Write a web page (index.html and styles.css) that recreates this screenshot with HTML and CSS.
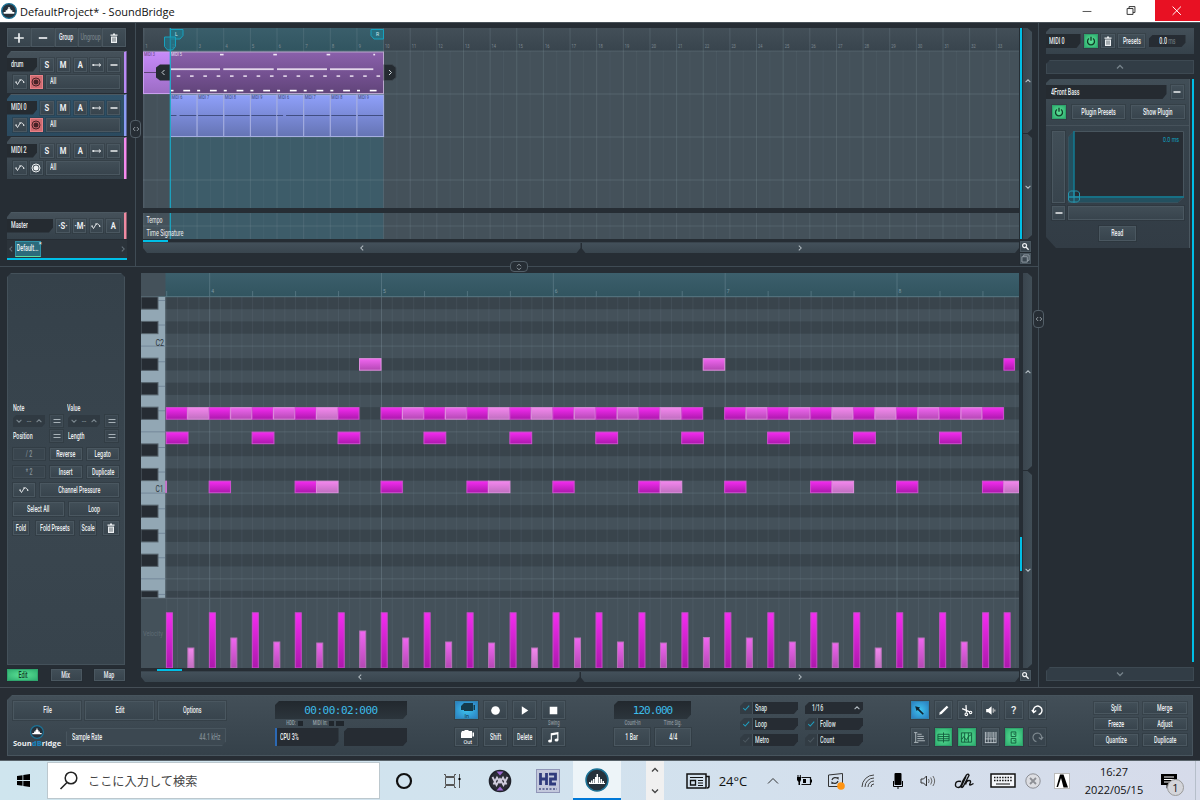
FILE: index.html
```
<!DOCTYPE html>
<html lang="ja">
<head>
    <meta charset="UTF-8">
    <meta name="viewport" content="width=device-width, initial-scale=1.0">
    <title>DefaultProject* - SoundBridge</title>
    <link rel="stylesheet" href="styles.css">
</head>
<body>

    <!-- Shared icons -->
    <svg class="defs" width="0" height="0">
        <symbol id="i-curve" viewBox="0 0 12 10"><path d="M1 5l2 3 3-5q1.500-1.500 3 0l1.500 2" fill="none" stroke="currentColor" stroke-width="1.100"/><circle cx="1.300" cy="5" r=".9" fill="currentColor"/><circle cx="6" cy="2.700" r=".9" fill="currentColor"/><circle cx="10.500" cy="5.300" r=".9" fill="currentColor"/></symbol>
        <symbol id="i-trash" viewBox="0 0 10 10"><path d="M1.500 1.500h7v1.300h-7zM4 .5h2v1H4zM2 3.400h6V10H2z" fill="currentColor"/><path d="M4 4.500v4.300M6 4.500v4.300" stroke="#3a464f" stroke-width=".8"/></symbol>
        <symbol id="i-arrow" viewBox="0 0 12 10"><path d="M2 5h8M8.300 3.200L10.500 5 8.300 6.800" fill="none" stroke="currentColor" stroke-width="1.200"/><circle cx="1.500" cy="5" r="1.300" fill="currentColor"/></symbol>
        <symbol id="i-minus" viewBox="0 0 10 10"><path d="M1.500 5h7" stroke="currentColor" stroke-width="1.400"/></symbol>
        <symbol id="i-plus" viewBox="0 0 10 10"><path d="M1 5h8M5 1v8" stroke="currentColor" stroke-width="1.400"/></symbol>
        <symbol id="i-rec" viewBox="0 0 10 10"><circle cx="5" cy="5" r="4" fill="none" stroke="currentColor" stroke-width="1"/><circle cx="5" cy="5" r="2.500" fill="currentColor"/></symbol>
        <symbol id="i-power" viewBox="0 0 10 10"><path d="M3 2.500a3.500 3.500 0 1 0 4 0M5 .8v4" fill="none" stroke="currentColor" stroke-width="1.300"/></symbol>
        <symbol id="i-up" viewBox="0 0 10 10"><path d="M2 6.500l3-3 3 3" fill="none" stroke="currentColor" stroke-width="1.300"/></symbol>
        <symbol id="i-down" viewBox="0 0 10 10"><path d="M2 3.500l3 3 3-3" fill="none" stroke="currentColor" stroke-width="1.300"/></symbol>
        <symbol id="i-left" viewBox="0 0 10 10"><path d="M6.500 2l-3 3 3 3" fill="none" stroke="currentColor" stroke-width="1.300"/></symbol>
        <symbol id="i-right" viewBox="0 0 10 10"><path d="M3.500 2l3 3-3 3" fill="none" stroke="currentColor" stroke-width="1.300"/></symbol>
        <symbol id="i-eq" viewBox="0 0 10 10"><path d="M1.500 3.500h7M1.500 6.500h7" stroke="currentColor" stroke-width="1"/></symbol>
        <symbol id="i-zoom" viewBox="0 0 10 10"><circle cx="4" cy="4" r="2.200" fill="none" stroke="currentColor" stroke-width="1.300"/><path d="M5.500 5.500L8.500 8.500" stroke="currentColor" stroke-width="1.600"/></symbol>
        <symbol id="i-copy" viewBox="0 0 10 10"><path d="M1 3h6v6H1zM3 3V1h6v6H7" fill="none" stroke="currentColor" stroke-width="1"/></symbol>
        <symbol id="i-check" viewBox="0 0 10 10"><path d="M1.500 5l2.500 2.500L9 2" fill="none" stroke="currentColor" stroke-width="1.300"/></symbol>
        <symbol id="i-logo" viewBox="0 0 24 24"><circle cx="12" cy="12" r="11" fill="#26313b" stroke="#1c7296" stroke-width="1.500"/><path d="M4 16v-2h1.500v2zM6 16v-3.500h1.500V16zM8 16v-5h1.500v5zM10 16V9h1.500v7zM11.500 16V6H13v10zM13.500 16V9H15v7zM15.500 16v-5H17v5zM17.500 16v-3h1.500v3zM4 15h16v1H4z" fill="#fff"/></symbol>
        <symbol id="i-logo-small" viewBox="0 0 24 24"><circle cx="12" cy="12" r="11" fill="#26313b" stroke="#1c7296" stroke-width="2"/><path d="M4 16v-2.500h3V11h2.500V8.500H11V6h2v2.500h1.500V11H17v2.500h3V16z" fill="#fff"/></symbol>
    </svg>

    <header class="titlebar">
        <svg class="title-logo"><use href="#i-logo-small"/></svg>
        <span class="title">DefaultProject* - SoundBridge</span>
        <svg class="win" viewBox="0 0 46 21"><path d="M18 11.500h9" stroke="#555" stroke-width="1"/></svg>
        <svg class="win" viewBox="0 0 46 21"><path d="M17.500 8.500h6v6h-6zM19.500 8.500v-2h6v6h-2" fill="none" stroke="#333"/></svg>
        <svg class="win close" viewBox="0 0 46 21"><path d="M18 6.500l8.500 8.500M26.500 6.500L18 15" stroke="#fff" stroke-width="1"/></svg>
    </header>

    <main class="workspace">
        <div class="left">
            <section class="upper">
                <aside class="tracks">
                    <div class="track-tools">
                        <div class="btn"><svg class="ic big"><use href="#i-plus"/></svg></div>
                        <div class="btn"><svg class="ic big"><use href="#i-minus"/></svg></div>
                        <div class="btn"><span class="t">Group</span></div>
                        <div class="btn dim"><span class="t">Ungroup</span></div>
                        <div class="btn"><svg class="ic"><use href="#i-trash"/></svg></div>
                    </div>
                    <div class="track violet">
                        <div class="trow">
                            <div class="name"><span class="t l">drum</span></div>
                            <div class="btn sq b"><span class="t">S</span></div><div class="btn sq b"><span class="t">M</span></div><div class="btn sq b"><span class="t">A</span></div>
                            <div class="btn sq"><svg class="ic"><use href="#i-arrow"/></svg></div>
                            <div class="btn sq"><svg class="ic"><use href="#i-minus"/></svg></div>
                        </div>
                        <div class="trow second">
                            <div class="btn sq"><svg class="ic"><use href="#i-curve"/></svg></div>
                            <div class="btn sq armed"><svg class="ic"><use href="#i-rec"/></svg></div>
                            <div class="btn input"><span class="t l">All</span></div>
                        </div>
                    </div>
                    <div class="track selected">
                        <div class="trow">
                            <div class="name"><span class="t l">MIDI 0</span></div>
                            <div class="btn sq b"><span class="t">S</span></div><div class="btn sq b"><span class="t">M</span></div><div class="btn sq b"><span class="t">A</span></div>
                            <div class="btn sq"><svg class="ic"><use href="#i-arrow"/></svg></div>
                            <div class="btn sq"><svg class="ic"><use href="#i-minus"/></svg></div>
                        </div>
                        <div class="trow second">
                            <div class="btn sq"><svg class="ic"><use href="#i-curve"/></svg></div>
                            <div class="btn sq armed"><svg class="ic"><use href="#i-rec"/></svg></div>
                            <div class="btn input"><span class="t l">All</span></div>
                        </div>
                    </div>
                    <div class="track pink">
                        <div class="trow">
                            <div class="name"><span class="t l">MIDI 2</span></div>
                            <div class="btn sq b"><span class="t">S</span></div><div class="btn sq b"><span class="t">M</span></div><div class="btn sq b"><span class="t">A</span></div>
                            <div class="btn sq"><svg class="ic"><use href="#i-arrow"/></svg></div>
                            <div class="btn sq"><svg class="ic"><use href="#i-minus"/></svg></div>
                        </div>
                        <div class="trow second">
                            <div class="btn sq"><svg class="ic"><use href="#i-curve"/></svg></div>
                            <div class="btn sq"><svg class="ic"><use href="#i-rec"/></svg></div>
                            <div class="btn input"><span class="t l">All</span></div>
                        </div>
                    </div>
                    <div class="track master">
                        <div class="trow">
                            <div class="name"><span class="t l">Master</span></div>
                            <div class="btn sq b"><span class="t">·S·</span></div><div class="btn sq b"><span class="t">·M·</span></div>
                            <div class="btn sq"><svg class="ic"><use href="#i-curve"/></svg></div>
                            <div class="btn sq b"><span class="t">A</span></div>
                        </div>
                    </div>
                    <div class="tabs">
                        <svg class="ic dimic"><use href="#i-left"/></svg>
                        <div class="tab"><span class="t">Default...</span><i>×</i></div>
                        <svg class="ic dimic end"><use href="#i-right"/></svg>
                    </div>
                    <div class="grip v tracks-grip"><svg viewBox="0 0 10 10"><path d="M4 2.500L1.500 5 4 7.500M6 2.500L8.500 5 6 7.500" fill="none" stroke="#aab3b9"/></svg></div>
                </aside>
                <div class="arrange">
                    <svg id="arrange" width="876" height="180"></svg>
                    <svg id="tempo" width="876" height="26"></svg>
                    <div class="line"><i></i></div>
                    <div class="hscroll">
                        <div class="thumb a"><svg class="ic"><use href="#i-left"/></svg></div>
                        <div class="thumb z"><svg class="ic"><use href="#i-right"/></svg></div>
                    </div>
                </div>
                <div class="side">
                    <div class="side-main">
                        <div class="mark"></div>
                        <div class="vscroll">
                            <div class="thumb up"><svg class="ic"><use href="#i-up"/></svg></div>
                            <div class="thumb dn"><svg class="ic"><use href="#i-down"/></svg></div>
                        </div>
                    </div>
                    <div class="btn mini"><svg class="ic"><use href="#i-zoom"/></svg></div>
                    <div class="btn mini grey"><svg class="ic"><use href="#i-copy"/></svg></div>
                </div>
                <div class="grip h"><svg viewBox="0 0 10 10"><path d="M2.500 4L5 1.500 7.500 4M2.500 6L5 8.500 7.500 6" fill="none" stroke="#aab3b9"/></svg></div>
            </section>

            <section class="lower">
                <aside class="editor">
                    <div class="edit-panel">
                        <div class="erow labels"><span class="t l">Note</span><span class="t l">Value</span></div>
                        <div class="erow steps">
                            <div class="stepper"><svg class="ic"><use href="#i-down"/></svg>--<svg class="ic"><use href="#i-up"/></svg></div>
                            <div class="btn eq"><svg class="ic"><use href="#i-eq"/></svg></div>
                            <div class="stepper"><svg class="ic"><use href="#i-down"/></svg>--<svg class="ic"><use href="#i-up"/></svg></div>
                            <div class="btn eq"><svg class="ic"><use href="#i-eq"/></svg></div>
                        </div>
                        <div class="erow steps second">
                            <div class="cap"><span class="t l">Position</span></div>
                            <div class="btn eq"><svg class="ic"><use href="#i-eq"/></svg></div>
                            <div class="cap"><span class="t l">Length</span></div>
                            <div class="btn eq"><svg class="ic"><use href="#i-eq"/></svg></div>
                        </div>
                        <div class="erow c3"><div class="btn dim2"><span class="t">/ 2</span></div><div class="btn"><span class="t">Reverse</span></div><div class="btn"><span class="t">Legato</span></div></div>
                        <div class="erow c3"><div class="btn dim2"><span class="t">* 2</span></div><div class="btn"><span class="t">Insert</span></div><div class="btn"><span class="t">Duplicate</span></div></div>
                        <div class="erow c2a"><div class="btn"><svg class="ic"><use href="#i-curve"/></svg></div><div class="btn"><span class="t">Channel Pressure</span></div></div>
                        <div class="erow c2"><div class="btn"><span class="t">Select All</span></div><div class="btn"><span class="t">Loop</span></div></div>
                        <div class="erow c4"><div class="btn"><span class="t">Fold</span></div><div class="btn"><span class="t">Fold Presets</span></div><div class="btn"><span class="t">Scale</span></div><div class="btn"><svg class="ic"><use href="#i-trash"/></svg></div></div>
                    </div>
                    <div class="modes">
                        <div class="btn green"><span class="t">Edit</span></div>
                        <div class="btn"><span class="t">Mix</span></div>
                        <div class="btn"><span class="t">Map</span></div>
                    </div>
                </aside>
                <div class="piano">
                    <svg id="roll" width="878" height="395"></svg>
                    <div class="line"><i></i></div>
                    <div class="hscroll">
                        <div class="thumb a"><svg class="ic"><use href="#i-left"/></svg></div>
                        <div class="thumb z"><svg class="ic"><use href="#i-right"/></svg></div>
                    </div>
                </div>
                <div class="side">
                    <div class="side-main">
                        <div class="mark short"></div>
                        <div class="vscroll">
                            <div class="thumb up"><svg class="ic"><use href="#i-up"/></svg></div>
                            <div class="thumb dn"><svg class="ic"><use href="#i-down"/></svg></div>
                        </div>
                    </div>
                    <div class="btn mini"><svg class="ic"><use href="#i-zoom"/></svg></div>
                </div>
            </section>
        </div>

        <aside class="rack">
            <div class="grip v rack-grip"><svg viewBox="0 0 10 10"><path d="M4 2.500L1.500 5 4 7.500M6 2.500L8.500 5 6 7.500" fill="none" stroke="#aab3b9"/></svg></div>
            <div class="rack-head">
                <div class="name"><span class="t l">MIDI 0</span></div>
                <div class="btn sq green"><svg class="ic"><use href="#i-power"/></svg></div>
                <div class="btn sq"><svg class="ic"><use href="#i-trash"/></svg></div>
                <div class="btn presets"><span class="t">Presets</span></div>
                <div class="delay"><span class="t">0.0 <em>ms</em></span></div>
            </div>
            <div class="rack-nav"><svg class="ic"><use href="#i-up"/></svg></div>
            <div class="rack-body">
                <div class="plugin">
                    <div class="prow first"><div class="name"><span class="t l">4Front Bass</span></div><div class="btn sq"><svg class="ic"><use href="#i-minus"/></svg></div></div>
                    <div class="prow"><div class="btn sq green"><svg class="ic"><use href="#i-power"/></svg></div><div class="btn w"><span class="t">Plugin Presets</span></div><div class="btn w"><span class="t">Show Plugin</span></div></div>
                    <div class="pad">
                        <div class="btn"></div>
                        <svg width="116" height="72" viewBox="0 0 116 72">
                            <path d="M.5 6L6 .5h109.500V66L110 71.500H.5z" fill="#272d34" stroke="#48555e"/>
                            <path d="M.5 6L6 .5V65h109.500L110 71.500H.5z" fill="#24505f"/>
                            <path d="M6 0v66M0 66h116" stroke="#137b93" stroke-width="1.500"/>
                            <path d="M.5 64v-2l2-2h7l2 2v7l-2 2h-7l-2-2zM6 60v12M0 66h12" fill="none" stroke="#2794ac"/>
                            <text x="95" y="11" textLength="16" lengthAdjust="spacingAndGlyphs" class="cyan-text">0.0 ms</text>
                        </svg>
                        <div class="btn"><svg class="ic"><use href="#i-minus"/></svg></div>
                        <div class="btn"></div>
                    </div>
                    <div class="btn read"><span class="t">Read</span></div>
                </div>
                <div class="rack-line"></div>
            </div>
            <div class="rack-nav last"><svg class="ic"><use href="#i-down"/></svg></div>
        </aside>
    </main>

    <footer class="transport">
        <div class="deck">
            <div class="g-menu">
                <div class="menu"><div class="btn"><span class="t">File</span></div><div class="btn"><span class="t">Edit</span></div><div class="btn"><span class="t">Options</span></div></div>
                <div class="brand-row">
                    <div class="brand"><svg><use href="#i-logo-small"/></svg><span>Soun<b>dB</b>ridge</span></div>
                    <div class="rate"><span class="t l">Sample Rate</span><span class="t r">44.1 kHz</span></div>
                </div>
            </div>
            <div class="g-time">
                <div class="lcd">00:00:02:000</div>
                <div class="leds"><span class="t r">HDD:</span><i></i><span class="t r">MIDI In:</span><i></i><i class="wide"></i></div>
                <div class="meters"><div class="cpu"><span class="t l">CPU 3%</span></div><div></div></div>
            </div>
            <div class="g-play">
                <div class="btn blue"><svg viewBox="0 0 18 16" width="18" height="16"><path d="M3 4l3-3h9v8H6V8H3zM15.500 3h1.500v5h-1.500z" fill="#153a4a"/><text x="6.500" y="15.500" class="tiny dark">In</text></svg></div>
                <div class="btn"><svg viewBox="0 0 12 12" class="ic pl"><circle cx="6" cy="6" r="4" fill="#fff"/></svg></div>
                <div class="btn"><svg viewBox="0 0 12 12" class="ic pl"><path d="M3.500 2l6 4-6 4z" fill="#fff"/></svg></div>
                <div class="btn"><svg viewBox="0 0 12 12" class="ic pl"><path d="M2.500 2.500h7v7h-7z" fill="#fff"/></svg></div>
                <span></span><span></span><span></span><span class="cap"><span class="t">Swing</span></span>
                <div class="btn"><svg viewBox="0 0 18 16" width="18" height="16"><path d="M3 4l1-2h2l1-1h3l1 1h3v7H3zM14.500 3.500H16v4h-1.500z" fill="#fff"/><text x="5.500" y="15" class="tiny">Out</text></svg></div>
                <div class="btn"><span class="t">Shift</span></div>
                <div class="btn"><span class="t">Delete</span></div>
                <div class="btn"><svg viewBox="0 0 12 12" class="ic pl"><path d="M4 9V2.500l6-1V8M4 3.500l6-1" fill="none" stroke="#fff" stroke-width="1.100"/><ellipse cx="2.800" cy="9.300" rx="1.800" ry="1.400" fill="#fff"/><ellipse cx="8.800" cy="8.300" rx="1.800" ry="1.400" fill="#fff"/></svg></div>
            </div>
            <div class="g-tempo">
                <div class="lcd">120.000</div>
                <span class="cap"><span class="t">Count-In</span></span><span class="cap"><span class="t">Time Sig.</span></span>
                <div class="btn"><span class="t">1 Bar</span></div><div class="btn"><span class="t">4/4</span></div>
            </div>
            <div class="g-opts">
                <div class="opt on"><svg class="ic"><use href="#i-check"/></svg><span class="t l">Snap</span></div>
                <div class="opt sel"><span class="t l">1/16</span><svg class="ic"><use href="#i-up"/></svg></div>
                <div class="opt on"><svg class="ic"><use href="#i-check"/></svg><span class="t l">Loop</span></div>
                <div class="opt on"><svg class="ic"><use href="#i-check"/></svg><span class="t l">Follow</span></div>
                <div class="opt"><svg class="ic"><use href="#i-check"/></svg><span class="t l">Metro</span></div>
                <div class="opt"><svg class="ic"><use href="#i-check"/></svg><span class="t l">Count</span></div>
            </div>
            <div class="g-tools">
                <div class="btn blue"><svg viewBox="0 0 12 12" class="ic pl"><path d="M2 2l4.500 1.300-1 1L10 9l-1 1-4.700-4.500-1 1z" fill="#10242f"/></svg></div>
                <div class="btn"><svg viewBox="0 0 12 12" class="ic pl"><path d="M2 10l.7-2.300L9 1.500 10.500 3 4.300 9.300z" fill="#fff"/></svg></div>
                <div class="btn"><svg viewBox="0 0 12 12" class="ic pl"><path d="M5.500 1l.5 7M2 4.300l7.500 3.200" stroke="#fff" stroke-width="1.200"/><circle cx="5.800" cy="9.500" r="1.200" fill="none" stroke="#fff"/><circle cx="9.800" cy="7.800" r="1.100" fill="none" stroke="#fff"/></svg></div>
                <div class="btn"><svg viewBox="0 0 12 12" class="ic pl"><path d="M2 4.500h2L7 2v8L4 7.500H2z" fill="#fff"/><path d="M8.500 4v4M10 5v2" stroke="#ccc"/></svg></div>
                <div class="btn q">?</div>
                <div class="btn"><svg viewBox="0 0 12 12" class="ic pl"><path d="M2.500 7.500A4 4 0 1 1 7 9.800M.8 5.500l1.700 2.300L4.800 6" fill="none" stroke="#fff" stroke-width="1.300"/></svg></div>
                <div class="btn grey"><svg viewBox="0 0 12 12" class="ic pl"><path d="M1 1.500h3M1 10.500h4M2.500 1.500v9M4 3h4M4 5h6M4 7h6M4 9h7" fill="none" stroke="#bcc5ca" stroke-width=".8"/></svg></div>
                <div class="btn green"><svg viewBox="0 0 14 14" class="ic pl"><path d="M1 3.500h12v7H1zM1 6h12M1 8.300h12M7 1.500v11" fill="none" stroke="#125c3d"/></svg></div>
                <div class="btn green"><svg viewBox="0 0 14 14" class="ic pl"><path d="M1.500 2h11v10h-11zM5 2v10M9 2v10M2 9l2-3 3 4 2-4 3-2" fill="none" stroke="#125c3d"/></svg></div>
                <div class="btn"><svg viewBox="0 0 14 14" class="ic pl"><path d="M1.500 1v12M4.500 1v12M7.500 1v12M10.500 1v12M13 1v12" fill="none" stroke="#bcc5ca"/><path d="M3 1v6M6 1v6M9 1v6M12 1v6" stroke="#9aa5ab" stroke-width=".8"/><path d="M1 8.500h12M1 12.500h12" stroke="#bcc5ca"/></svg></div>
                <div class="btn green"><svg viewBox="0 0 14 14" class="ic pl"><path d="M4.500 1h5v5h-5zM4.500 8h5v5h-5zM7 3h1v1M7 10h1v1" fill="none" stroke="#125c3d"/></svg></div>
                <div class="btn ghost"><svg viewBox="0 0 12 12" class="ic pl"><path d="M9.500 7.500A4 4 0 1 0 5 9.800M11.200 5.500L9.500 7.800 7.200 6" fill="none" stroke="#7c878e" stroke-width="1.100"/></svg></div>
            </div>
            <div class="g-acts">
                <div class="btn"><span class="t">Split</span></div><div class="btn"><span class="t">Merge</span></div>
                <div class="btn"><span class="t">Freeze</span></div><div class="btn"><span class="t">Adjust</span></div>
                <div class="btn"><span class="t">Quantize</span></div><div class="btn"><span class="t">Duplicate</span></div>
            </div>
        </div>
    </footer>

    <nav class="taskbar">
        <div class="cell start"><svg width="15" height="15" viewBox="0 0 15 15"><path d="M1 3l5.500-.8v4.900H1zM7.300 2.100L14 1v6.100H7.300zM1 7.900h5.500v4.900L1 12zM7.300 7.900H14V14l-6.700-1z"/></svg></div>
        <div class="search">
            <svg width="22" height="22" viewBox="0 0 22 22"><circle cx="13" cy="8" r="5.800" fill="none" stroke="#222" stroke-width="1.500"/><path d="M9 12.500L2.500 19" stroke="#222" stroke-width="1.600"/></svg>
            <span>ここに入力して検索</span>
        </div>
        <div class="cell"><svg width="18" height="18" viewBox="0 0 18 18"><circle cx="9" cy="9" r="7" fill="none" stroke="#111" stroke-width="2.200"/></svg></div>
        <div class="cell"><svg width="18" height="18" viewBox="0 0 18 18"><path d="M2.500 5.500h9v7h-9zM1 2.500h1.500v2h9v-2H13M1 15.500h1.500v-2h9v2H13M16.500 2v14" fill="none" stroke="#555"/><path d="M15.500 6h2v2h-2z"/></svg></div>
        <div class="cell"><svg width="24" height="24" viewBox="0 0 24 24"><circle cx="12" cy="12" r="10.500" fill="#2b2c36" stroke="#20222b" stroke-width="1.600"/><path d="M8.500 2.500h7L12 6.500zM8.500 21.500h7L12 17.500z" fill="#9a68d0"/><path d="M4.500 8l4 8L12 10l3.500 6 4-8M5.500 15.500L9 8.500l3 5 3-5 3.500 7" fill="none" stroke="#cfcbdc" stroke-width="1.800"/></svg></div>
        <div class="cell"><svg width="24" height="24" viewBox="0 0 24 24"><rect x=".5" y=".5" width="23" height="23" fill="#c3c8dc" stroke="#9196b8"/><path d="M4.500 4v12M10.500 4v12M4 10h7M13 5.200h6.500V10h-5v5H20" fill="none" stroke="#2f3a7c" stroke-width="2.800"/><path d="M3 20h18" stroke="#4c5486" stroke-width="1.500" stroke-dasharray="2 1.500"/></svg></div>
        <div class="cell active"><svg width="24" height="24"><use href="#i-logo"/></svg></div>
        <div class="spin"><svg class="ic"><use href="#i-up"/></svg><svg class="ic"><use href="#i-down"/></svg></div>
        <div class="tray">
            <div class="cell"><svg width="24" height="16" viewBox="0 0 24 16"><path d="M1 1h19v14H1zM20 3.500h3V13q0 2-2 2" fill="none" stroke="#111" stroke-width="1.500"/><path d="M4 4.500h13M12 7.500h5M12 10h5M12 12.500h5" stroke="#111"/><path d="M4.500 7.500h5v4.500h-5z" fill="none" stroke="#111" stroke-width="1.300"/></svg></div>
            <div class="cell temp">24°C</div>
            <div class="cell"><svg width="12" height="8" viewBox="0 0 12 8"><path d="M1 6.500l5-5 5 5" fill="none" stroke="#333"/></svg></div>
            <div class="cell"><svg width="17" height="14" viewBox="0 0 17 14"><path d="M5.500 3.500h9v7h-9" fill="none" stroke="#111" stroke-width="1.200"/><path d="M7 5h3v4H7zM14.500 5.500H16v3h-1.500zM1 3h4v3L4 8v3H2.500V8L1 6zM1.500 1h1v2h-1zM3.800 1h1v2h-1z"/></svg></div>
            <div class="cell"><svg width="18" height="18" viewBox="0 0 18 18"><path d="M1.500 3l14-1.500v13H1.500z" fill="none" stroke="#333"/><path d="M5 8a3.500 3 0 0 1 6-1.500V5M11 9a3.500 3 0 0 1-6 1.500V12" fill="none" stroke="#333" stroke-width="1.200"/><circle cx="14" cy="14" r="3.800" fill="#ff9412"/></svg></div>
            <div class="cell"><svg width="14" height="14" viewBox="0 0 14 14"><path d="M1 13A12 12 0 0 1 13 1M4 13a9 9 0 0 1 9-9M7 13a6 6 0 0 1 6-6M10 13a3 3 0 0 1 3-3" fill="none" stroke="#444"/></svg></div>
            <div class="cell"><svg width="12" height="18" viewBox="0 0 12 18"><rect x="2.500" y="1" width="7" height="12" rx="1"/><path d="M1.500 9v5.500h9V9M6 14v3" fill="none" stroke="#000"/></svg></div>
            <div class="cell"><svg width="16" height="14" viewBox="0 0 16 14"><path d="M1 5h2.500L6.500 2v10l-3-3H1z" fill="none" stroke="#333"/><path d="M8.500 5q1.300 2 0 4M10.700 3.500q2.500 3.500 0 7M12.900 2q3.500 5 0 10" fill="none" stroke="#666"/></svg></div>
            <div class="cell"><svg width="20" height="18" viewBox="0 0 20 18"><path d="M7 9.500q-5-1-5.500 2.500T4.500 15.500q3-.5 4-6L12.500 3q2-2 2.500.5L9.500 14q-2 3-2 0L12 4.500M11.500 12.500q1-4 3.500-4t1 3 3.500 0" fill="none" stroke="#111" stroke-width="1.400"/></svg></div>
            <div class="cell"><svg width="26" height="15" viewBox="0 0 26 15"><rect x="1" y="1" width="24" height="13" fill="#f4f6fa" stroke="#111" stroke-width="1.500"/><path d="M4 4.500h18M4 7.500h18" stroke="#111" stroke-width="1.300" stroke-dasharray="1.500 1.200"/><path d="M6 11h14" stroke="#111"/></svg></div>
            <div class="cell"><svg width="16" height="16" viewBox="0 0 16 16"><circle cx="8" cy="8" r="7.200" fill="#dcdde2" stroke="#8d8f95"/><path d="M5 5l6 6M11 5l-6 6" stroke="#8d8f95" stroke-width="1.800"/></svg></div>
            <div class="cell"><svg width="16" height="16" viewBox="0 0 16 16"><rect x=".5" y=".5" width="15" height="15" fill="#fff" stroke="#bbb"/><path d="M6 1.500h3.500L14 14.500h-4.500L7 5l-3 9H2.500z"/></svg></div>
            <div class="clock"><span>16:27</span><span>2022/05/15</span></div>
            <div class="cell notif"><svg width="16" height="16" viewBox="0 0 16 16"><path d="M0 1h16v11H9l-3.500 3.500V12H0z"/><path d="M3 4h10M3 6.500h10M3 9h7" stroke="#fff"/></svg><i>1</i></div>
        </div>
    </nav>

    <script src="script.js"></script>
</body>
</html>
```
FILE: styles.css
```
* {
    margin: 0;
    padding: 0;
    box-sizing: border-box;
}

body {
    width: 1200px;
    height: 800px;
    overflow: hidden;
    display: flex;
    flex-direction: column;
    font-family: Roboto, "Noto Sans CJK JP", sans-serif;
    font-size: 8.200px;
    line-height: 1;
    color: #eceff1;
    background: #262d34;
}

svg {
    display: block;
    flex: none;
}

.defs {
    position: absolute;
}

/* Condensed label */
.t {
    display: inline-block;
    white-space: nowrap;
    font-weight: 500;
    transform: scaleX(0.65);
}

.t.l {
    transform-origin: left center;
}

.t.r {
    transform-origin: right center;
}

.ic {
    width: 10px;
    height: 10px;
}

.ic.big {
    width: 12px;
    height: 12px;
}

.ic.pl {
    width: 13px;
    height: 13px;
}

.btn {
    display: flex;
    align-items: center;
    justify-content: center;
    min-width: 0;
    flex: none;
    background: linear-gradient(#414e57, #38444d);
    border: 1px solid #4a5760;
    outline: 1px solid rgba(32, 39, 45, 0.25);
}

.btn.dim {
    color: #727e86;
}

.btn.grey {
    color: #98a3aa;
}

.btn.dim2 {
    color: #86929a;
    border-color: #414d56;
    background: #39454e;
}

.btn.sq {
    width: 13.500px;
    height: 14px;
}

.btn.b .t {
    font-size: 9.500px;
    font-weight: 700;
    transform: scaleX(0.8);
}

.btn.green {
    color: #103c28;
    border-color: #2fa56d;
    background: radial-gradient(#5de397, #2fae70);
}

.btn.blue {
    border-color: #2f86b4;
    background: radial-gradient(#3cc4ee, #2c7fc0);
}

.btn.armed {
    color: #472226;
    border-color: #e88187;
    background: #cf6a70;
}

.name {
    display: flex;
    align-items: center;
    background: #252b31;
    clip-path: polygon(0 0, 100% 0, 100% 65%, calc(100% - 4px) 100%, 0 100%);
}

/* Title bar */
.titlebar {
    height: 22px;
    flex: none;
    display: flex;
    align-items: center;
    background: #fff;
    color: #111;
}

.title-logo {
    width: 16px;
    height: 16px;
    margin: 0 3px 0 1px;
}

.title {
    flex: 1;
    font: 11px "Open Sans", sans-serif;
}

.win {
    width: 45px;
    height: 21px;
    align-self: flex-start;
}

.win.close {
    background: #e81123;
}

.workspace {
    height: 665px;
    flex: none;
    display: flex;
    border-top: 1px solid #4a535a;
}

.left {
    width: 1039px;
    flex: none;
    border-right: 1px solid #3f4b54;
}

.upper {
    position: relative;
    height: 244px;
    display: flex;
    border-bottom: 1px solid #3f4b54;
}

/* Tracks */
.tracks {
    position: relative;
    width: 136px;
    flex: none;
    padding: 5px 0 0 7px;
    border-right: 1px solid #3f4b54;
}

.track-tools {
    display: grid;
    grid-template-columns: repeat(5, 1fr);
    width: 119px;
    height: 19px;
    margin-bottom: 4px;
}

.track {
    width: 119.500px;
    height: 42px;
    margin-bottom: 1px;
    padding-top: 5.500px;
    background: linear-gradient(#45515a, #35414a);
    border-top: 1px solid #4b5861;
    border-right: 3px solid #b98af5;
    clip-path: polygon(4px 0, 100% 0, 100% 100%, 0 100%, 0 5px);
}

.track.selected {
    background: linear-gradient(#30536a, #2b4a5f);
    border-right-color: #8c9cf5;
}

.track.pink {
    border-right-color: #f58aee;
}

.track.master {
    height: 27px;
    margin-top: 33px;
    border-right-color: #f08aa0;
}

.trow {
    display: flex;
    gap: 3.200px;
    height: 14px;
}

.trow .name {
    width: 30px;
    padding-left: 4px;
    flex: none;
}

.master .name {
    width: 46px;
}

.trow.second {
    margin-top: 3px;
    padding-left: 6px;
}

.trow .input {
    width: 73.500px;
    justify-content: flex-start;
    padding-left: 3px;
}

.tabs {
    display: flex;
    align-items: center;
    width: 120px;
    height: 20px;
    padding-bottom: 1px;
    background: #2b333a;
    border-bottom: 2px solid #00bfe6;
}

.dimic {
    width: 8px;
    color: #65717a;
}

.dimic.end {
    margin-left: auto;
}

.tab {
    position: relative;
    width: 26px;
    height: 16px;
    display: flex;
    align-items: center;
    justify-content: center;
    background: #2c6b7c;
    border: 1px solid #2f91a6;
    border-bottom-color: #63dba0;
}

.tab i {
    position: absolute;
    right: -2px;
    top: -2px;
    font-style: normal;
    font-size: 6px;
}

.grip {
    position: absolute;
    display: flex;
    align-items: center;
    justify-content: center;
    background: #262d34;
    border: 1px solid #525e67;
    z-index: 2;
}

.grip svg {
    width: 8px;
    height: 8px;
}

.grip.v {
    width: 11px;
    height: 18px;
    border-radius: 4px;
}

.grip.h {
    width: 18px;
    height: 11px;
    left: 509.500px;
    bottom: -6px;
    border-radius: 4px;
}

.tracks-grip {
    right: -6px;
    top: 97px;
}

.rack-grip {
    left: -13px;
    top: 282px;
}

/* Arrangement */
.arrange {
    width: 876px;
    margin-left: 7px;
    padding-top: 5px;
    flex: none;
}

#tempo {
    margin-top: 5px;
}

.line {
    height: 3px;
    margin-top: 1px;
    padding-bottom: 1px;
    border-bottom: 1px solid #39444d;
}

.line i {
    display: block;
    width: 25px;
    height: 2px;
    background: #00bfe6;
}

.piano .line i {
    margin-left: 16px;
}

.hscroll {
    display: grid;
    grid-template-columns: 1fr 1fr;
    gap: 1px;
    height: 10px;
}

.thumb {
    display: flex;
    align-items: center;
    justify-content: center;
    color: #b4bdc3;
    background: linear-gradient(#43505a, #39454e);
}

.thumb .ic {
    width: 8px;
    height: 8px;
}

.thumb.a,
.thumb.z {
    clip-path: polygon(0 0, 100% 0, 100% 50%, calc(100% - 4px) 100%, 4px 100%, 0 50%);
}

.side {
    width: 12px;
    margin-left: 1px;
    padding-top: 5px;
    display: flex;
    flex-direction: column;
    gap: 1px;
}

.side-main {
    display: flex;
    gap: 1px;
    height: 211px;
    margin-bottom: 1px;
}

.mark {
    width: 2px;
    background: #00bfe6;
}

.mark.short {
    height: 34px;
    margin-top: 264px;
}

.vscroll {
    flex: 1;
    display: grid;
    grid-template-rows: 1fr 1fr;
    gap: 1px;
}

.thumb.up,
.thumb.dn {
    background: linear-gradient(90deg, #3a454e, #414e57);
    clip-path: polygon(0 0, 50% 0, 100% 4px, 100% calc(100% - 4px), 50% 100%, 0 100%);
}

.btn.mini {
    width: 11px;
    height: 11px;
}

.btn.mini .ic {
    width: 9px;
    height: 9px;
}

/* Piano roll */
.lower {
    height: 420px;
    display: flex;
    padding-top: 6px;
}

.lower .side {
    padding-top: 0;
}

.lower .side-main {
    height: 395px;
}

.editor {
    width: 118px;
    margin-left: 7px;
    flex: none;
}

.edit-panel {
    height: 392px;
    padding: 130px 6px 0;
    background: linear-gradient(#35414a, #3a464f 60%, #37434c);
    border: 1px solid #44515a;
    clip-path: polygon(4px 0, calc(100% - 4px) 0, 100% 4px, 100% 100%, 0 100%, 0 4px);
}

.erow {
    display: grid;
    width: 106px;
    height: 12px;
    margin: 0 0 6px -1px;
    gap: 5px;
}

.erow.labels {
    grid-template-columns: 49px 1fr;
    height: 8px;
    margin-bottom: 3px;
}

.erow.steps {
    grid-template-columns: 32px 13px 32px 13px;
    margin-bottom: 3px;
    gap: 5px;
}

.erow.steps.second {
    margin-bottom: 6px;
}

.erow.c3 {
    grid-template-columns: 32px 32px 32px;
}

.erow.c2a {
    grid-template-columns: 22px 1fr;
    height: 14px;
    margin: -1px 0 5px -1px;
}

.erow.c2 {
    grid-template-columns: 1fr 1fr;
    height: 14px;
    margin-bottom: 5px;
}

.erow.c4 {
    grid-template-columns: 16px 38px 16px 16px;
    gap: 6.500px;
    height: 14px;
}

.stepper {
    display: flex;
    align-items: center;
    justify-content: space-between;
    padding: 0 2px;
    color: #7c8890;
    background: #303a42;
    clip-path: polygon(3px 0, 100% 0, 100% 70%, calc(100% - 3px) 100%, 0 100%, 0 3px);
}

.stepper .ic {
    width: 8px;
    height: 8px;
}

.btn.eq {
    color: #a7b1b7;
    background: #39454e;
    border-color: #414d56;
}

.cap {
    display: flex;
    align-items: center;
    min-width: 0;
}

.modes {
    display: flex;
    justify-content: space-between;
    margin-top: 4px;
}

.modes .btn {
    width: 31px;
    height: 12px;
}

.piano {
    width: 878px;
    margin-left: 16px;
    flex: none;
}

/* Plugin rack */
.rack {
    position: relative;
    width: 148px;
    margin: 5px 0 0 7px;
}

.rack-head {
    display: flex;
    align-items: center;
    gap: 3.500px;
    height: 26px;
    background: linear-gradient(#434f58, #36424b);
    clip-path: polygon(4px 0, 100% 0, 100% 100%, 0 100%, 0 4px);
}

.rack-head .name {
    width: 34.500px;
    height: 14px;
    padding-left: 3px;
    flex: none;
}

.btn.presets {
    width: 27px;
    height: 14px;
}

.delay {
    width: 37px;
    height: 12px;
    display: flex;
    align-items: center;
    justify-content: center;
    background: #262c33;
    clip-path: polygon(4px 0, 100% 0, 100% 65%, calc(100% - 4px) 100%, 0 100%, 0 4px);
}

.delay em {
    font-style: normal;
    color: #66727a;
}

.rack-nav {
    display: flex;
    align-items: center;
    justify-content: center;
    height: 14px;
    margin: 6px 0 5px;
    color: #76828a;
    background: #323d46;
    border: 1px solid #3d4952;
    clip-path: polygon(4px 0, 100% 0, 100% 100%, 0 100%, 0 4px);
}

.rack-nav.last {
    margin-top: 5px;
}

.rack-body {
    display: flex;
    justify-content: space-between;
    height: 583px;
}

.plugin {
    width: 144px;
    height: 169px;
    background: linear-gradient(#414e57, #37434c 28%, #323c45);
    border-right: 1px solid #4a5760;
    clip-path: polygon(4px 0, 100% 0, 100% 100%, 10px 100%, 0 158px, 0 4px);
}

.rack-line {
    width: 2px;
    background: #00bfe6;
}

.prow {
    display: flex;
    gap: 6px;
    padding: 6px 6px 6px;
    border-bottom: 1px solid #46525b;
}

.prow.first {
    padding: 6px 5px 0 0;
    gap: 4px;
    border: 0;
}

.prow .name {
    width: 121px;
    padding-left: 5px;
}

.prow .w {
    width: 53.500px;
}

.pad {
    display: grid;
    grid-template-columns: 13px 116px;
    grid-template-rows: 72px 14px;
    gap: 3px;
    padding: 5px 0 6px 6px;
}

.btn.read {
    width: 37px;
    height: 15px;
    margin: 0 auto;
}

.cyan-text {
    fill: #0fa6c4;
    font-size: 8px;
}

/* Transport */
.transport {
    height: 74px;
    flex: none;
    padding: 7px 7px 5px;
    border-top: 1px solid #454e56;
    border-bottom: 1px solid #59636a;
    background: #272d34;
}

.deck {
    display: flex;
    height: 61px;
    padding: 5px 5px 8px 6px;
    background: linear-gradient(#434f58, #35414a);
    border: 1px solid #47545d;
    clip-path: polygon(5px 0, 100% 0, 100% 100%, 0 100%, 0 5px);
}

.g-menu {
    width: 213px;
    margin-left: -1px;
}

.menu {
    display: grid;
    grid-template-columns: 1fr 1fr 1fr;
    gap: 4px;
    height: 19px;
}

.brand-row {
    display: flex;
    gap: 5px;
    margin-top: 5px;
}

.brand {
    width: 48px;
    height: 24px;
    flex: none;
    display: flex;
    flex-direction: column;
    align-items: center;
    font: 700 7.600px/9px "Open Sans", sans-serif;
}

.brand svg {
    width: 14px;
    height: 14px;
}

.brand b {
    color: #1b7fb6;
}

.rate {
    flex: 1;
    height: 18px;
    margin-top: 3px;
    display: flex;
    align-items: center;
    justify-content: space-between;
    padding: 0 5px;
    border: 1px solid #48555e;
    background: #3c4851;
    clip-path: polygon(4px 0, 100% 0, 100% 75%, calc(100% - 4px) 100%, 0 100%, 0 4px);
}

.rate .r {
    color: #7d8990;
}

.g-time {
    width: 132px;
    margin-left: 49px;
}

.lcd {
    height: 18px;
    display: flex;
    align-items: center;
    justify-content: center;
    color: #3dbdea;
    font: 11px "DejaVu Sans Mono", monospace;
    letter-spacing: -0.500px;
    background: linear-gradient(#22282e, #2c353c);
    clip-path: polygon(4px 0, 100% 0, 100% 75%, calc(100% - 4px) 100%, 0 100%, 0 4px);
}

.leds {
    height: 9px;
    display: flex;
    align-items: center;
    justify-content: flex-start;
    gap: 2px;
    padding-left: 6px;
    font-size: 6.500px;
    color: #97a2a9;
}

.leds i {
    width: 5px;
    height: 5px;
    background: #20262c;
}

.leds i.wide {
    width: 8px;
}

.meters {
    display: grid;
    grid-template-columns: 1fr 1fr;
    gap: 5px;
    height: 18px;
}

.meters div {
    display: flex;
    align-items: center;
    padding-left: 3px;
    background: #262c33;
    clip-path: polygon(4px 0, 100% 0, 100% 75%, calc(100% - 4px) 100%, 0 100%, 0 4px);
}

.meters .cpu {
    border-left: 2px solid #2c69b4;
    clip-path: polygon(0 0, 100% 0, 100% 75%, calc(100% - 4px) 100%, 0 100%);
}

.g-play {
    display: grid;
    grid-template-columns: repeat(4, 23px);
    grid-template-rows: 18px 9px 18px;
    column-gap: 6px;
    margin-left: 48px;
}

.g-play .cap,
.g-tempo .cap {
    justify-content: center;
    font-size: 6.500px;
    color: #8c979e;
}

.tiny {
    font-size: 5.500px;
    fill: #fff;
}

.tiny.dark {
    fill: #153a4a;
}

.g-tempo {
    display: grid;
    grid-template-columns: 36px 36px;
    grid-template-rows: 18px 9px 18px;
    column-gap: 5px;
    margin-left: 49px;
}

.g-tempo .lcd {
    grid-column: span 2;
    letter-spacing: -1px;
}

.g-opts {
    display: grid;
    grid-template-columns: 58px 58px;
    grid-template-rows: repeat(3, 12px);
    gap: 4px 7px;
    margin-left: 49px;
    margin-top: 1px;
}

.opt {
    display: flex;
    align-items: center;
    gap: 5px;
    padding-left: 2px;
    color: #dfe4e6;
    background: linear-gradient(90deg, #323c44 12px, #46525b 12px, #46525b 13px, #262c33 13px);
    clip-path: polygon(4px 0, 100% 0, 100% 60%, calc(100% - 4px) 100%, 0 100%, 0 4px);
}

.opt .ic {
    width: 8px;
    height: 8px;
    color: #4c5860;
}

.opt.on .ic {
    color: #1f9fc0;
}

.opt.sel {
    padding: 0 2px 0 7px;
    justify-content: space-between;
    background: #262c33;
}

.opt.sel .ic {
    color: #b4bdc3;
}

.g-tools {
    display: grid;
    grid-template-columns: repeat(6, 17.500px);
    grid-template-rows: 18px 18px;
    gap: 9px 6px;
    margin-left: 48px;
}

.btn.q {
    font-size: 11px;
    font-weight: 500;
}

.btn.ghost {
    background: none;
    border-color: #434f58;
}

.g-acts {
    display: grid;
    grid-template-columns: 44px 44px;
    grid-template-rows: repeat(3, 12px);
    gap: 4px 5px;
    margin-left: 48px;
    margin-top: 1px;
}

/* Taskbar */
.taskbar {
    flex: 1;
    display: flex;
    align-items: center;
    color: #111;
    background: linear-gradient(90deg, #cfe5ee, #d2e2ee 50%, #d6dbea);
}

.cell {
    width: 48px;
    height: 39px;
    display: flex;
    align-items: center;
    justify-content: center;
    flex: none;
}

.cell.start {
    width: 47px;
}

.search {
    width: 333px;
    height: 37px;
    display: flex;
    align-items: center;
    gap: 8px;
    padding-left: 10px;
    background: #fff;
    border: 1px solid #bcc8ce;
    font: 12.200px "Noto Sans CJK JP", sans-serif;
    color: #444;
}

.cell.active {
    margin-left: 1px;
    background: #edf4f8;
    border-bottom: 2px solid #0078d7;
}

.spin {
    width: 18px;
    height: 39px;
    margin-left: 25px;
    display: flex;
    flex-direction: column;
    justify-content: space-between;
    align-items: center;
    padding: 4px 0;
    background: #f0f0f0;
    color: #444;
}

.tray {
    display: grid;
    grid-template-columns: 30px 40px 40px 22px 42px 22px 38px 22px 50px 28px 32px 26px 78px 32px;
    align-items: center;
    margin-left: 19px;
    border-right: 1px solid #b6bfca;
    padding-right: 10px;
}

.tray .cell {
    width: auto;
}

.cell.temp {
    font: 13px "Open Sans", sans-serif;
}

.clock {
    display: flex;
    flex-direction: column;
    align-items: center;
    gap: 1px;
    font: 11px/17px "Open Sans", sans-serif;
}

.notif {
    position: relative;
}

.notif i {
    position: absolute;
    left: 14px;
    top: 18px;
    width: 17px;
    height: 17px;
    border-radius: 50%;
    border: 1px solid #999;
    background: #d4d5da;
    font: 11px/15px "Open Sans", sans-serif;
    text-align: center;
}
```
FILE: script.js
```
const NS = 'http://www.w3.org/2000/svg';

function rect(svg, x, y, w, h, fill, stroke) {
    const r = document.createElementNS(NS, 'rect');
    r.setAttribute('x', x);
    r.setAttribute('y', y);
    r.setAttribute('width', w);
    r.setAttribute('height', h);
    r.setAttribute('fill', fill);
    if (stroke) r.setAttribute('stroke', stroke);
    svg.appendChild(r);
}

function path(svg, d, fill, stroke) {
    const p = document.createElementNS(NS, 'path');
    p.setAttribute('d', d);
    p.setAttribute('fill', fill);
    if (stroke) p.setAttribute('stroke', stroke);
    svg.appendChild(p);
}

function text(svg, x, y, str, size, fill, width) {
    const t = document.createElementNS(NS, 'text');
    t.setAttribute('x', x);
    t.setAttribute('y', y);
    t.setAttribute('font-size', size);
    t.setAttribute('fill', fill);
    if (width) {
        t.setAttribute('textLength', width);
        t.setAttribute('lengthAdjust', 'spacingAndGlyphs');
    }
    t.textContent = str;
    svg.appendChild(t);
}

function gradient(svg, id, top, bottom) {
    const g = document.createElementNS(NS, 'linearGradient');
    g.id = id;
    g.setAttribute('x2', 0);
    g.setAttribute('y2', 1);
    g.innerHTML = `<stop stop-color="${top}"/><stop offset="1" stop-color="${bottom}"/>`;
    svg.appendChild(g);
}

// Arrangement view
const BAR = 26.64;
const barX = n => 0.3 + (n - 1) * BAR;

function drawArrange() {
    const s = document.getElementById('arrange');
    gradient(s, 'ruler', '#434f58', '#38444d');
    gradient(s, 'loopRuler', '#3a5e6b', '#315560');
    gradient(s, 'clipSel', '#8a60ab', '#61447a');
    gradient(s, 'clipViolet', '#c78bfa', '#9c6cc4');
    gradient(s, 'clipBlue', '#8fa0fa', '#6574b4');

    rect(s, 0, 0, 876, 180, '#44515a');
    rect(s, 0, 0, 876, 23, 'url(#ruler)');
    rect(s, 27, 0, 213.5, 180, '#3d5c69');
    rect(s, 27, 0, 213.5, 23, 'url(#loopRuler)');
    for (let n = 1; n <= 33; n++) {
        rect(s, barX(n), 0, 1, 180, 'rgba(130,150,160,.25)');
        rect(s, barX(n) + BAR / 2, 23, 1, 157, 'rgba(130,150,160,.10)');
        text(s, barX(n) + 2, 20, n, 5.5, '#7d8991', n > 9 ? 4.5 : 2.5);
    }
    [23, 66, 109, 152].forEach(y => rect(s, 0, y - 0.5, 876, 1, 'rgba(130,150,160,.28)'));

    rect(s, 0.5, 24, 27, 41.5, 'url(#clipViolet)', '#c9a0ee');
    rect(s, 1, 44, 18, 1, '#5e4479');
    text(s, 1, 28, 'MIDI 3', 5.5, '#5e4479', 11);

    rect(s, 27.5, 24, 213, 41.5, 'url(#clipSel)', '#b9a6cc');
    [[27.7, 77], [80.3, 130.7], [134, 184], [187, 230.3]].forEach(([a, b]) => rect(s, a, 40.3, b - a, 1.8, '#e3d6ea'));
    [77, 130.3, 183.6].forEach(x => rect(s, x, 25.8, 3.6, 1.6, '#f0e6f5'));
    rect(s, 230.3, 25.8, 1.8, 1.6, '#f0e6f5');
    for (let i = 0; i < 16; i++) rect(s, 33.7 + i * BAR / 2, 47.3, 3.6, 1.6, '#e3d6ea');
    for (let i = 0; i < 8; i++) {
        rect(s, 27.5 + i * BAR, 61.8, 3, 1.6, '#fff');
        rect(s, 40.3 + i * BAR, 61.8, 6.8, 1.6, '#fff');
    }
    text(s, 28, 28, 'MIDI 5', 5.5, '#e8dff0', 11);

    ['6', '7', '8', '9', '6', '7', '8', '9'].forEach((id, i) => {
        const x = 27.5 + i * BAR;
        rect(s, x, 67, BAR, 41.5, 'url(#clipBlue)', '#a5aee0');
        rect(s, x + (i % 4 ? 1 : 9), 87, i % 4 ? 25 : 17, 1, '#414e82');
        if (i % 4 === 0) rect(s, x, 87, 6, 1, '#414e82');
        text(s, x + 1, 71, 'MIDI ' + id, 5.5, '#39457a', 11);
    });

    // trim handles
    path(s, 'M27 36.500H17l-4 3v10l4 3h10z', '#252b31');
    path(s, 'M21.500 42l-2.500 2.500 2.500 2.500', 'none', '#ccd3d7');
    path(s, 'M241 36.500h8l4 3v10l-4 3h-8z', '#252b31', '#3c464e');
    path(s, 'M246 42l2.500 2.500-2.500 2.500', 'none', '#ccd3d7');

    // locators and playhead
    rect(s, 26.7, 0, 1.2, 180, '#18a8c6');
    path(s, 'M27.500 1.500h12.500v6l-3 3.500h-9.500z', '#276f80', '#16a2bf');
    path(s, 'M240.500 1.500h-12.500v6l3 3.500h9.500z', '#276f80', '#16a2bf');
    path(s, 'M21.500 9h11v9.500l-3 3.500h-5l-3-3.500z', 'rgba(30,125,146,.6)', '#16a2bf');
    text(s, 32, 8, 'L', 5, '#cfe6ec');
    text(s, 233, 8, 'R', 5, '#cfe6ec');
}

function drawTempo() {
    const s = document.getElementById('tempo');
    rect(s, 0, 0, 876, 26, '#44515a');
    rect(s, 27, 0, 213.5, 26, '#3d5c69');
    for (let n = 1; n <= 33; n++) {
        rect(s, barX(n), 0, 1, 26, 'rgba(130,150,160,.22)');
        rect(s, barX(n) + BAR / 2, 0, 1, 26, 'rgba(130,150,160,.10)');
    }
    rect(s, 0, 12.5, 876, 1, 'rgba(130,150,160,.25)');
    rect(s, 26.7, 0, 1.2, 26, '#18a8c6');
    text(s, 3.5, 9.5, 'Tempo', 8.2, '#eceff1', 16);
    text(s, 3.5, 22.5, 'Time Signature', 8.2, '#eceff1', 37);
}

// Piano roll
const ROW = 12.25;
const TOP = 23.9;
const BEAT = 42.96;
const START = 24.7;
// rows from D#2 down
const KEYS = ['D#', 'D', 'C#', 'C', 'B', 'A#', 'A', 'G#', 'G', 'F#', 'F', 'E', 'D#', 'D', 'C#', 'C',
    'B', 'A#', 'A', 'G#', 'G', 'F#', 'F', 'E', 'D#'];

function note(s, x, row, w, fill) {
    const width = Math.min(w, 878 - x);
    rect(s, x + 0.5, TOP + row * ROW + 0.5, width - 0.5, ROW - 0.7, `url(#${fill})`, fill === 'strong' ? '#d24ed2' : '#e08fdf');
}

function drawRoll() {
    const s = document.getElementById('roll');
    gradient(s, 'strong', '#f42cf0', '#ac18ac');
    gradient(s, 'mid', '#f066f0', '#b448b4');
    gradient(s, 'soft', '#f487ee', '#c06fc0');
    gradient(s, 'head', '#3c5f6c', '#31545f');

    rect(s, 0, 0, 878, 395, '#44515a');
    KEYS.forEach((k, i) => {
        const h = i === 24 ? 6.8 : ROW;
        if (k.includes('#')) rect(s, 24, TOP + i * ROW, 854, h, '#39444c');
        if (k === 'C' || k === 'F') rect(s, 24, TOP + (i + 1) * ROW - 0.3, 854, 1, 'rgba(130,150,160,.25)');
    });
    for (let i = 0; i < 80; i++) {
        const x = START + 0.5 + i * BEAT / 4;
        rect(s, x, 24, 1, 371, (i - 4) % 16 === 0 ? 'rgba(130,150,160,.35)' : 'rgba(130,150,160,.13)');
    }

    // ruler
    rect(s, 24.5, 0, 853.5, 24, 'url(#head)');
    for (let i = 0; i < 20; i++) {
        const x = START + 0.5 + i * BEAT;
        const bar = (i - 1) % 4 === 0;
        rect(s, x, bar ? 0 : 18, 1, bar ? 24 : 6, '#52727e');
        if (bar) text(s, x + 2, 20, 4 + (i - 1) / 4, 5, '#7f99a3');
    }
    rect(s, 0, 23.2, 878, 1, '#5a7883');

    // keyboard
    rect(s, 0, 24, 24.3, 301, '#92a7b4');
    KEYS.forEach((k, i) => {
        const y = TOP + i * ROW;
        if (k.includes('#')) {
            rect(s, 17, i === 24 ? y + 3 : y + ROW / 2 - 3, 7, 1, '#74889a');
            rect(s, 0, y, 17, i === 24 ? 6.8 : ROW, '#262c33', '#56636c');
        }
        if (k === 'C' || k === 'F') rect(s, 0, y + ROW - 0.3, 24, 1, '#74889a');
    });
    text(s, 14.5, 72.5, 'C2', 9, '#2c363e', 8.5);
    text(s, 14.5, 219, 'C1', 9, '#2c363e', 8);

    // hi-hats: eighths with two gaps for the open hat
    for (let i = 0; i < 39; i++) {
        const x = START + i * BEAT / 2;
        if (i === 9 || i === 25) {
            note(s, x, 5, 22, 'mid');
        } else {
            note(s, x, 9, BEAT / 2, i % 2 === 0 ? 'strong' : (i % 8 === 1 || i % 8 === 7 ? 'soft' : 'mid'));
        }
    }
    note(s, START + 39 * BEAT / 2, 5, 11, 'strong');

    // snare
    for (let i = 0; i < 10; i++) note(s, START + i * BEAT * 2, 11, 22.3, 'strong');

    // kick
    rect(s, 24.3, TOP + 15 * ROW, 1.5, ROW, '#e67ce4');
    for (let b = 0; b < 5; b++) {
        const x = START + BEAT + b * BEAT * 4;
        note(s, x, 15, 21.8, 'strong');
        note(s, x + BEAT * 2, 15, 21.8, 'strong');
        note(s, x + BEAT * 2.5, 15, 22, 'soft');
    }

    // velocity lane
    rect(s, 0, 324.8, 878, 1, '#55626b');
    text(s, 2, 363, 'Velocity', 7.5, '#5f6c75', 20);
    const soft = [20, 30, 26, 25, 37, 30, 26, 25, 20, 30, 26, 25, 30.5, 30, 26, 25, 20, 30, 26, 55.2];
    for (let i = 0; i < 20; i++) {
        const x = START + 0.5 + i * BEAT;
        rect(s, x + 0.2, 339.8, 6, 55.2, 'url(#strong)', '#c84cc8');
        rect(s, x + BEAT / 2 + 0.2, 395 - soft[i], 6, soft[i], i === 19 ? 'url(#strong)' : i % 8 === 0 ? 'url(#soft)' : 'url(#mid)', i === 19 ? '#c84cc8' : '#b873b9');
    }
}

drawArrange();
drawTempo();
drawRoll();
```
